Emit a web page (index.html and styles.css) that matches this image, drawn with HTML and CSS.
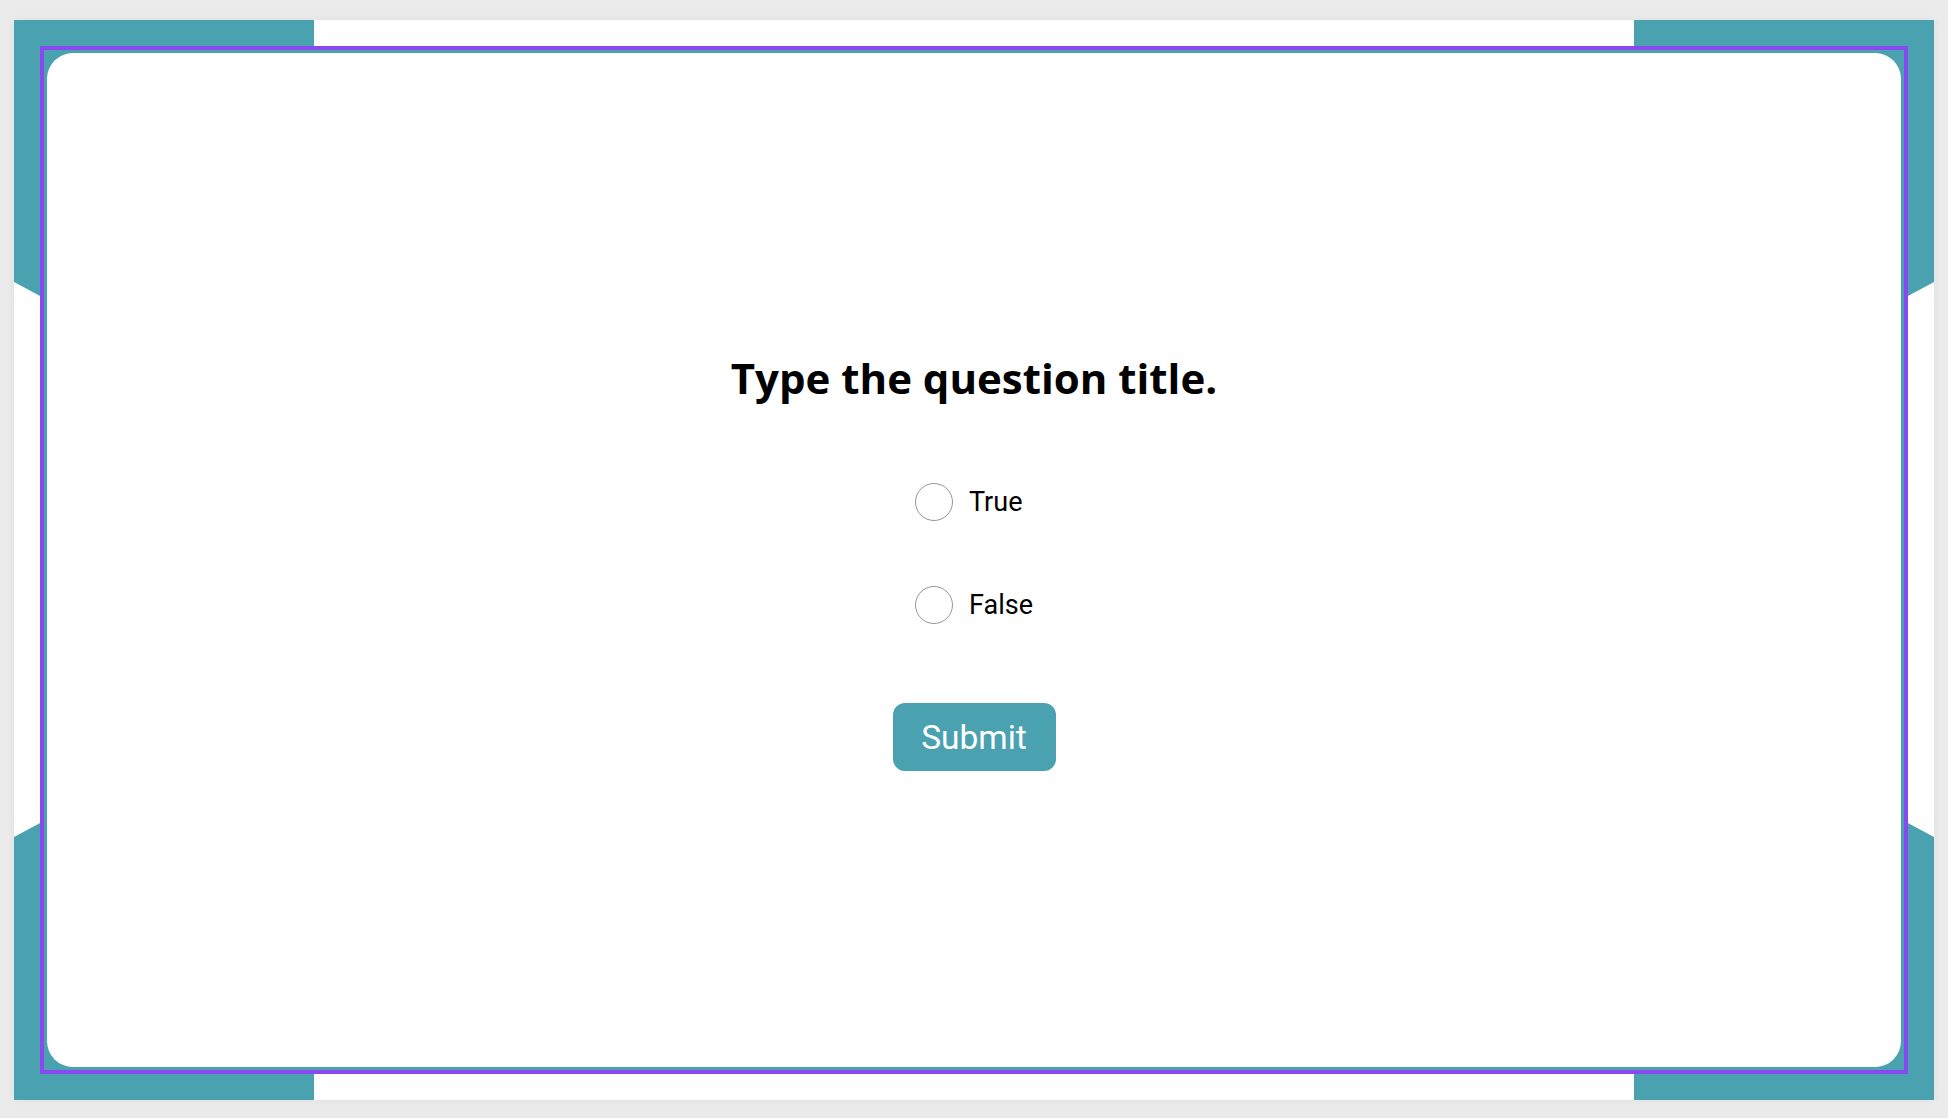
FILE: index.html
```html
<!DOCTYPE html>
<html lang="en">
<head>
<meta charset="utf-8">
<title>Question</title>
<link rel="stylesheet" href="styles.css">
</head>
<body>
<div class="slide">
  <div class="corner corner-tl"></div>
  <div class="corner corner-tr"></div>
  <div class="corner corner-bl"></div>
  <div class="corner corner-br"></div>
  <div class="frame">
    <div class="card">
      <h1 class="title">Type the question title.</h1>
      <div class="options">
        <label class="option"><input type="radio" name="answer" class="radio"><span class="option-label">True</span></label>
        <label class="option"><input type="radio" name="answer" class="radio"><span class="option-label">False</span></label>
      </div>
      <button class="submit" type="button">Submit</button>
    </div>
  </div>
</div>
</body>
</html>
```
FILE: styles.css
```css
html, body {
  margin: 0;
  padding: 0;
}
body {
  background: #ebebeb;
  padding: 20px 14px 18px 14px;
  width: 1920px;
  height: 1080px;
}
.slide {
  position: relative;
  width: 1920px;
  height: 1080px;
  background: #ffffff;
  box-sizing: border-box;
  padding: 26px;
  box-shadow: 0 0 8px rgba(0, 0, 0, 0.06);
}
.corner {
  position: absolute;
  width: 300px;
  height: 480px;
  background: #4aa2b1;
}
.corner-tl {
  left: 0;
  top: 0;
  clip-path: polygon(0 0, 300px 0, 300px 423px, 0 262px);
}
.corner-tr {
  right: 0;
  top: 0;
  clip-path: polygon(0 0, 300px 0, 300px 262px, 0 423px);
}
.corner-bl {
  left: 0;
  bottom: 0;
  clip-path: polygon(0 217px, 300px 56px, 300px 480px, 0 480px);
}
.corner-br {
  right: 0;
  bottom: 0;
  clip-path: polygon(0 56px, 300px 217px, 300px 480px, 0 480px);
}
.frame {
  position: relative;
  z-index: 1;
  height: 100%;
  box-sizing: border-box;
  border: 4px solid #8a48f1;
  background: #4aa2b1;
  padding: 3px;
}
.card {
  height: 100%;
  background: #ffffff;
  border-radius: 26px;
  display: flex;
  flex-direction: column;
  align-items: center;
  justify-content: center;
}
.title {
  margin: 0;
  font-family: "Open Sans", "Liberation Sans", sans-serif;
  font-weight: 700;
  font-size: 42px;
  line-height: 57px;
  color: #000000;
}
.options {
  margin-top: 77px;
  display: flex;
  flex-direction: column;
  align-items: flex-start;
  gap: 65px;
}
.option {
  display: flex;
  align-items: center;
  gap: 16px;
  height: 38px;
  cursor: pointer;
}
.radio {
  appearance: none;
  -webkit-appearance: none;
  margin: 0;
  width: 38px;
  height: 38px;
  border: 1.5px solid #969696;
  border-radius: 50%;
  box-sizing: border-box;
  background: #ffffff;
}
.option-label {
  font-family: Roboto, "Liberation Sans", sans-serif;
  font-size: 27px;
  color: #000000;
  line-height: 38px;
}
.submit {
  margin-top: 79px;
  width: 163px;
  height: 68px;
  border: none;
  border-radius: 12px;
  background: #4aa2b1;
  color: #ffffff;
  font-family: Roboto, "Liberation Sans", sans-serif;
  font-size: 33.5px;
  padding: 0;
  cursor: pointer;
}
```
